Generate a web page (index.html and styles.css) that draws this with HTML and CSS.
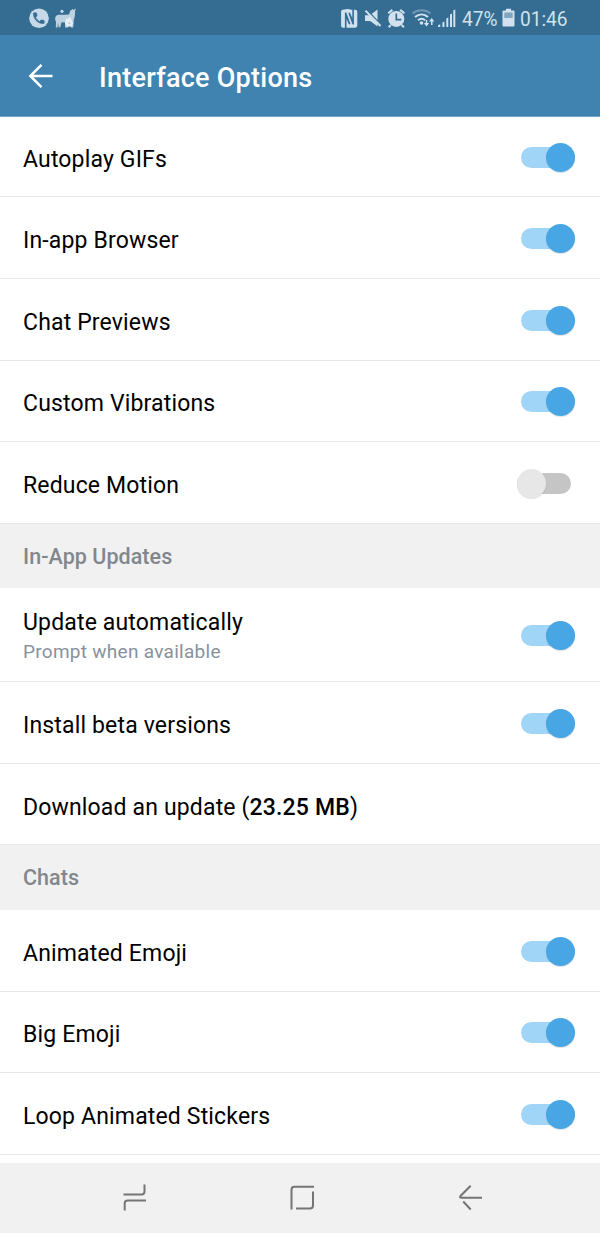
FILE: index.html
```html
<!DOCTYPE html>
<html lang="en">
<head>
<meta charset="utf-8">
<title>Interface Options</title>
<link rel="stylesheet" href="styles.css">
</head>
<body>
<div class="screen">
  <div class="status">
    <svg class="status-left" width="50" height="24" viewBox="28 6 50 24">
      <circle cx="39" cy="18.200" r="9.800" fill="#c6d9e8"/>
      <path transform="translate(38.800 18.200) scale(.6) translate(-12 -12)" d="M6.620 10.790c1.440 2.830 3.760 5.140 6.590 6.590l2.200-2.200c.270-.270.670-.360 1.020-.240 1.120.370 2.330.570 3.570.570.550 0 1 .450 1 1V20c0 .550-.450 1-1 1-9.390 0-17-7.610-17-17 0-.550.450-1 1-1h3.500c.550 0 1 .450 1 1 0 1.250.200 2.450.570 3.570.110.350.030.740-.250 1.020l-2.200 2.200z" fill="#356c92" stroke="#356c92" stroke-width="1"/>
      <path d="M55.500 17c.6-1.500 2.200-2.300 4-2.200h6l3.500-.4 1.500-4.200 1.500-.5.300-1 1.500 1.200 1.800-1.400.3 1.400-.9.600c.3 3.800-.1 6.600-1.200 9.200l-.6 7.800h-2.200l-1-2.600-1.400 1.400-.5 1.200H65v-5l-3.500-.2-1.200 5h-1.800l-.4-5-.6 5.200h-1.700l.2-5.800c-.7-1.200-1.200-2.800-.5-5z" fill="#bdd2e1"/>
      <circle cx="62" cy="11.300" r="1.600" fill="#c6d9e8"/>
      <path d="M66 18.500l2 .5 2-2.500 1.500 3.500 1.500 3-1.700 3.500h-4l-2.300-3z" fill="#e5eff6"/>
      <circle cx="69.300" cy="23.200" r="1.200" fill="#bdd2e1"/>
    </svg>
    <svg class="status-right" width="116" height="24" viewBox="340 6 116 24" fill="#d1e2ee">
      <path d="M344 9.500q5-1 7 .3h4q2.300.2 2.300 2v13.900q0 1.700-2 2h-11q-3.200 0-3.200-2V11.500q0-1.800 2.900-2z"/>
      <path d="M344.900 12.500h1.400l4.200 11.500-1.500.5-2.500-5.500v9h-1.600zM353.900 24.500h-1.400l-4.200-11.500 1.500-.5 2.500 5.500V9h1.600z" fill="#356c92"/>
      <path d="M365 15.300h4.200l8.300 8.300v3l-6.500-5-2-.7h-4zM371.600 14l5.900-4.500v11z"/>
      <path d="M366.500 9.800L381.500 25.500" stroke="#356c92" stroke-width="1.800"/>
      <path d="M365.500 10.600L380.500 26" stroke="#d1e2ee" stroke-width="2"/>
      <circle cx="396.300" cy="18.900" r="8"/>
      <path d="M388.200 13.200l4.200-3.300M404.400 13.200l-4.200-3.300M390.900 25l-2.200 2.200M401.700 25l2.200 2.200" stroke="#d1e2ee" stroke-width="2"/>
      <path d="M396.300 13.500v6.200h5" fill="none" stroke="#356c92" stroke-width="1.700"/>
      <g fill="none" stroke="#d1e2ee" stroke-width="2">
        <path d="M412.500 13.500c5-4.200 13-4.200 18 0" opacity=".38"/>
        <path d="M415 17c4-3.400 9.200-3.400 13 0"/>
        <path d="M418 20.200c2.300-1.900 4.900-1.900 7.100 0"/>
      </g>
      <circle cx="421.500" cy="23" r="1.800"/>
      <path d="M426.500 20v5M431.800 25v-5" stroke="#d1e2ee" stroke-width="1.500"/>
      <path d="M423.800 23h5.400l-2.700 3.600zM429 21.500h5.400l-2.700-3.600z"/>
      <path d="M438 27v-1.500l2.200-1.500v3zM442.400 22.500l2-1V27h-2zM446.300 18.500l2-1V27h-2zM450 14.500l2-1V27h-2zM453.300 10.500l2-1V27h-2z"/>
    </svg>
    <span class="battery-text"><span class="narrow">47%</span></span>
    <svg class="battery" width="13" height="20" viewBox="0 0 13 20">
      <path d="M1.500 2.500H4V.7h5v1.800h2.500q1 0 1 1v14q0 1-1 1h-10q-1 0-1-1v-14q0-1 1-1z" fill="#d1e2ee"/>
      <path d="M2.300 4.500h8.400v5.500H2.300z" fill="#7fa5c0"/>
    </svg>
    <span class="clock"><span class="narrow">01:46</span></span>
  </div>
  <header class="appbar">
    <svg class="back" width="26" height="26" viewBox="0 0 26 26" fill="none" stroke="#fff" stroke-width="2.500"><path d="M24.500 13H2.500M13.500 1.800L2.300 13L13.500 24.200"/></svg>
    <h1 class="title">Interface Options</h1>
  </header>
  <main class="list">
    <div class="row first"><span class="label">Autoplay GIFs</span><span class="switch on"></span></div>
    <div class="row"><span class="label">In-app Browser</span><span class="switch on"></span></div>
    <div class="row"><span class="label">Chat Previews</span><span class="switch on"></span></div>
    <div class="row"><span class="label">Custom Vibrations</span><span class="switch on"></span></div>
    <div class="row last"><span class="label">Reduce Motion</span><span class="switch off"></span></div>
    <h2 class="section">In-App Updates</h2>
    <div class="row tall"><div class="stack"><span class="label">Update automatically</span><span class="hint">Prompt when available</span></div><span class="switch on"></span></div>
    <div class="row"><span class="label">Install beta versions</span><span class="switch on"></span></div>
    <div class="row last"><span class="label">Download an update (<b>23.25 MB</b>)</span></div>
    <h2 class="section">Chats</h2>
    <div class="row"><span class="label">Animated Emoji</span><span class="switch on"></span></div>
    <div class="row"><span class="label">Big Emoji</span><span class="switch on"></span></div>
    <div class="row"><span class="label">Loop Animated Stickers</span><span class="switch on"></span></div>
  </main>
  <nav class="navbar">
    <svg width="28" height="30" viewBox="0 0 28 30"><path d="M1.500 12.500h18q3 0 3-3V2.500M24 18.500H5.700q-3 0-3 3V28.500"/></svg>
    <svg width="28" height="30" viewBox="0 0 28 30"><path d="M25 4.700H5.500q-3 0-3 3V27.500M24 9.500V23.500q0 3-3 3H7"/></svg>
    <svg width="28" height="30" viewBox="0 0 28 30"><path d="M14.700 3.700L4.500 14q-1.200 1.700.5 1.700H26M7.200 19.500l7.500 8"/></svg>
  </nav>
</div>
</body>
</html>
```
FILE: styles.css
```css
body { margin: 0; font-family: Roboto, "Liberation Sans", sans-serif; background: #fff; }
.screen { width: 600px; height: 1233px; display: flex; flex-direction: column; overflow: hidden; }
.status { height: 35px; flex: none; background: #356c92; display: flex; align-items: flex-start; padding: 6px 0 0 28px; box-sizing: border-box; color: #d1e2ee; font-size: 21px; line-height: 26px; }
.status-right { margin-left: 262px; }
.battery-text { width: 40px; margin-left: 6px; }
.narrow { display: inline-block; transform: scaleX(.91); transform-origin: left; }
.battery { margin: 2px 0 0; }
.clock { margin-left: 5px; }
.appbar { height: 82px; flex: none; box-sizing: border-box; background: #4083b1; display: flex; align-items: center; padding: 0 0 0 28px; border-bottom: 1px solid #73a5c7; }
.title { margin: 4px 0 0 45px; color: #fff; font-size: 27px; font-weight: 500; line-height: 32px; letter-spacing: .25px; }
.list { flex: 1; min-height: 0; overflow: hidden; }
.row { height: 81.6px; box-sizing: border-box; border-bottom: 1px solid #e4e7e8; display: flex; align-items: center; justify-content: space-between; padding: 2px 25px 0 23px; }
.first { height: 80.4px; }
.last { border-bottom: 1px solid #e7e7e7; }
.tall { height: 94px; }
.label { font-size: 23px; line-height: 28px; color: #000; padding-top: 5px; letter-spacing: .16px; }
.label b { font-weight: 500; }
.stack { display: flex; flex-direction: column; }
.stack .label { padding-top: 1px; }
.hint { font-size: 19px; line-height: 24px; margin-top: 3px; color: #87929c; letter-spacing: .28px; }
.section { margin: 0; height: 64.5px; box-sizing: border-box; background: #f1f1f1; padding: 19px 23px 0; font-size: 21.500px; line-height: 27px; font-weight: 500; color: #81878c; letter-spacing: .05px; }
.switch { position: relative; width: 54px; height: 21px; border-radius: 11px; background: #a0d5f8; flex: none; }
.switch::after { content: ""; position: absolute; width: 29px; height: 29px; top: -4px; right: 0; border-radius: 50%; background: #48a6e4; box-shadow: 0 1px 1px rgba(0,0,0,.12); }
.off { background: #c5c5c5; margin-right: 4px; }
.off::after { right: auto; left: 0; background: #e7e7e7; }
.navbar { height: 70px; flex: none; background: #f1f1f1; display: flex; align-items: flex-start; gap: 140px; padding: 19px 0 0 121.500px; box-sizing: border-box; }
.navbar svg { fill: none; stroke: #757575; stroke-width: 2; }
.navbar svg + svg { margin-left: -1px; }
```
